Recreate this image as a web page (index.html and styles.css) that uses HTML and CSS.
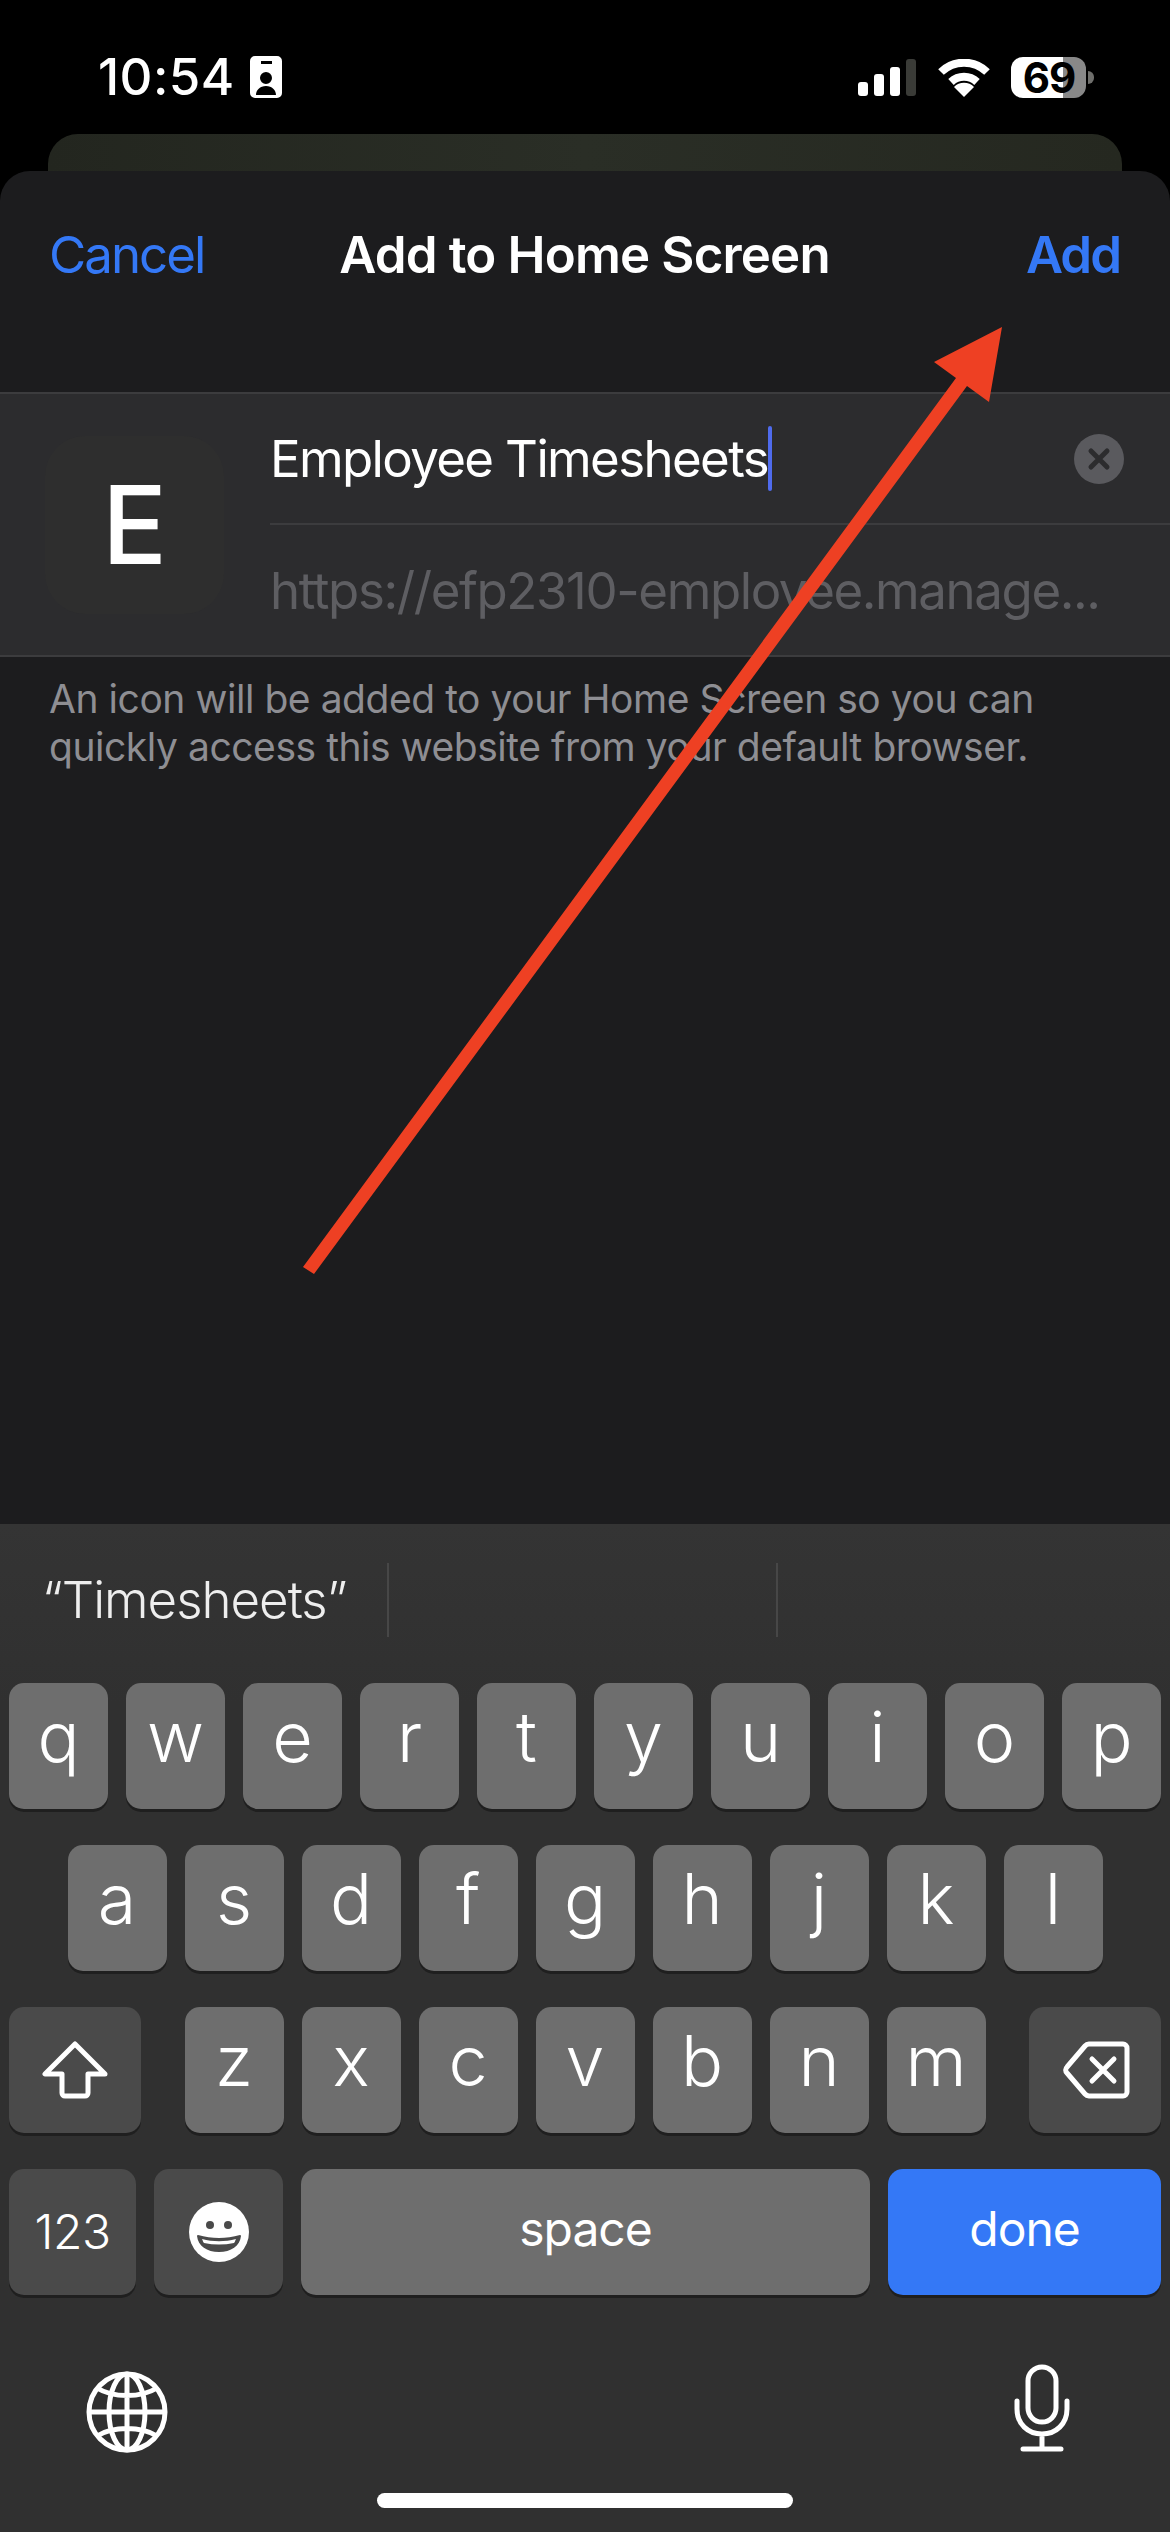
FILE: index.html
```html
<!DOCTYPE html>
<html lang="en">
<head>
  <meta charset="UTF-8" />
  <meta name="viewport" content="width=device-width, initial-scale=1.0"/>
  <title>Add to Home Screen</title>
  <link rel="stylesheet" href="styles.css">
</head>
<body>
  <div class="phone">
    <div class="status">
      <div class="status-left">
        <span class="time">10:54</span>
        <svg class="id-icon" viewBox="0 0 32 42">
          <path fill="#fff" fill-rule="evenodd" d="M5 0h22a5 5 0 0 1 5 5v32a5 5 0 0 1-5 5H5a5 5 0 0 1-5-5V5a5 5 0 0 1 5-5zM11 5v3h11V5zM16 16a6 6 0 1 0 0 12a6 6 0 1 0 0-12zM6 39h20c0-5-4-9-10-9S6 34 6 39z"/>
        </svg>
      </div>
      <div class="status-right">
        <div class="signal">
          <span class="bar bar1"></span>
          <span class="bar bar2"></span>
          <span class="bar bar3"></span>
          <span class="bar bar4"></span>
        </div>
        <svg class="wifi" viewBox="0 0 52 38">
          <path fill="none" stroke="#fff" stroke-width="8" d="M3 13a33 33 0 0 1 46 0"/>
          <path fill="none" stroke="#fff" stroke-width="8" d="M13 23a19 19 0 0 1 26 0"/>
          <path fill="#fff" d="M26 38l-10-10a14 14 0 0 1 20 0z"/>
        </svg>
        <div class="battery">69</div>
        <span class="battery-nub"></span>
      </div>
    </div>
    <div class="peek"></div>

    <div class="sheet">
      <div class="nav">
        <span class="nav-link">Cancel</span>
        <span class="nav-title">Add to Home Screen</span>
        <span class="nav-link nav-add">Add</span>
      </div>

      <div class="card">
        <div class="app-icon">E</div>
        <div class="fields">
          <div class="field field-name">
            <span class="name">Employee Timesheets</span><span class="caret"></span>
            <span class="clear">
              <svg viewBox="0 0 50 50"><path fill="none" stroke="#2c2c2e" stroke-width="5" stroke-linecap="round" d="M17 17l16 16M33 17L17 33"/></svg>
            </span>
          </div>
          <div class="field field-url">https://efp2310-employee.manage...</div>
        </div>
      </div>

      <p class="desc">An icon will be added to your Home Screen so you can<br>quickly access this website from your default browser.</p>
    </div>

    <div class="keyboard">
      <div class="suggestions">
        <div class="suggestion">“Timesheets”</div>
        <div class="suggestion"></div>
        <div class="suggestion suggestion-last"></div>
      </div>

      <div class="rows">
        <div class="row row-center">
          <span class="key">q</span><span class="key">w</span><span class="key">e</span><span class="key">r</span><span class="key">t</span><span class="key">y</span><span class="key">u</span><span class="key">i</span><span class="key">o</span><span class="key">p</span>
        </div>
        <div class="row row-center">
          <span class="key">a</span><span class="key">s</span><span class="key">d</span><span class="key">f</span><span class="key">g</span><span class="key">h</span><span class="key">j</span><span class="key">k</span><span class="key">l</span>
        </div>
        <div class="row row-between">
          <span class="key key-dark key-wide">
            <svg class="shift" viewBox="0 0 66 58"><path fill="none" stroke="#fff" stroke-width="5" stroke-linejoin="round" d="M33 3L3 33h17v19a3 3 0 0 0 3 3h20a3 3 0 0 0 3-3V33h17z"/></svg>
          </span>
          <div class="row-letters">
            <span class="key">z</span><span class="key">x</span><span class="key">c</span><span class="key">v</span><span class="key">b</span><span class="key">n</span><span class="key">m</span>
          </div>
          <span class="key key-dark key-wide">
            <svg class="backspace" viewBox="0 0 68 58"><path fill="none" stroke="#fff" stroke-width="5" stroke-linejoin="round" d="M27 3h34a4 4 0 0 1 4 4v44a4 4 0 0 1-4 4H27a6 6 0 0 1-4-2L5 32a4 4 0 0 1 0-6L23 5a6 6 0 0 1 4-2z"/><path fill="none" stroke="#fff" stroke-width="5" stroke-linecap="round" d="M30 18l22 22M52 18L30 40"/></svg>
          </span>
        </div>
        <div class="row row-bottom">
          <span class="key key-dark key-num">123</span>
          <span class="key key-dark key-emoji">
            <svg class="emoji" viewBox="0 0 60 60">
              <circle cx="30" cy="30" r="30" fill="#fff"/>
              <circle cx="21" cy="23" r="4" fill="#4a4a4a"/>
              <circle cx="39" cy="23" r="4" fill="#4a4a4a"/>
              <path fill="#4a4a4a" d="M9 33c14 4 28 4 42 0c1 0 1 1 1 1c-1 10-10 16-22 16S9 44 8 34c0 0 0-1 1-1z"/>
              <path fill="#fff" d="M13 37c11 3 23 3 34 0c-1 2-1 3-2 4c-10 2-20 2-30 0c-1-1-1-2-2-4z"/>
            </svg>
          </span>
          <span class="key key-space">space</span>
          <span class="key key-done">done</span>
        </div>
      </div>

      <div class="kb-bottom">
        <svg class="globe" viewBox="0 0 84 84">
          <g fill="none" stroke="#fff" stroke-width="5">
            <circle cx="42" cy="42" r="38"/>
            <ellipse cx="42" cy="42" rx="18" ry="38"/>
            <path d="M42 4v76M4 42h76M12 18c16 10 44 10 60 0M12 66c16-10 44-10 60 0"/>
          </g>
        </svg>
        <svg class="mic" viewBox="0 0 56 90">
          <g fill="none" stroke="#fff" stroke-width="5" stroke-linecap="round">
            <rect x="14" y="3" width="28" height="55" rx="14"/>
            <path d="M3 37v8c0 15 11 25 25 25s25-10 25-25v-8M28 70v15M9 85h38"/>
          </g>
        </svg>
      </div>

      <div class="home-bar"></div>
    </div>

    <svg class="arrow" viewBox="0 0 1170 2532">
      <polygon fill="#ee4023" points="303,1267 314,1274 967,386 989,402 1002,327 934,362 956,378"/>
    </svg>
  </div>
</body>
</html>
```

FILE: styles.css
```css
* {
  margin: 0;
  padding: 0;
  box-sizing: border-box;
}

body {
  background: #000;
  font-family: Inter, "Liberation Sans", sans-serif;
  color: #fff;
}

.phone {
  position: relative;
  width: 1170px;
  height: 2532px;
  display: flex;
  flex-direction: column;
  overflow: hidden;
}

/* status bar */
.status {
  height: 134px;
  display: flex;
  justify-content: space-between;
  align-items: flex-start;
  padding: 56px 76px 0 98px;
}

.status-left {
  display: flex;
  align-items: center;
  gap: 15px;
}

.time {
  font-size: 51px;
  font-weight: 500;
  line-height: 42px;
  letter-spacing: 0.4px;
}

.id-icon {
  width: 32px;
  height: 42px;
}

.status-right {
  display: flex;
  align-items: flex-start;
}

.signal {
  display: flex;
  align-items: flex-end;
  gap: 6px;
  height: 37px;
  margin-top: 3px;
  margin-right: 22px;
}

.bar {
  width: 10px;
  border-radius: 3px;
  background: #fff;
}

.bar1 { height: 14px; }
.bar2 { height: 22px; }
.bar3 { height: 29px; }
.bar4 { height: 37px; background: #3a3b37; }

.wifi {
  width: 52px;
  height: 38px;
  margin-top: 3px;
  margin-right: 21px;
}

.battery {
  width: 75px;
  height: 41px;
  border-radius: 12px;
  background: linear-gradient(90deg, #fff 69%, #888 69%);
  color: #000;
  font-size: 42px;
  font-weight: 700;
  line-height: 41px;
  text-align: center;
  letter-spacing: -1px;
  margin-top: 1px;
  padding-left: 1px;
}

.battery-nub {
  width: 6px;
  height: 13px;
  margin-top: 15px;
  margin-left: 2px;
  border-radius: 0 6px 6px 0;
  background: #6f6f6c;
}

.peek {
  height: 37px;
  margin: 0 48px;
  border-radius: 30px 30px 0 0;
  background: linear-gradient(90deg, #23261f, #2a2e26 50%, #252820);
}

/* sheet */
.sheet {
  height: 1353px;
  border-radius: 30px 30px 0 0;
  background: #1c1c1e;
}

.nav {
  height: 221px;
  display: grid;
  grid-template-columns: 1fr auto 1fr;
  align-items: start;
  padding: 53px 50px 0 49px;
  font-size: 51px;
  line-height: 62px;
  letter-spacing: -1.5px;
}

.nav-link {
  color: #3478f6;
  letter-spacing: -2px;
}

.nav-title {
  font-weight: 600;
  letter-spacing: -0.85px;
}

.nav-add {
  font-weight: 600;
  justify-self: end;
}

.card {
  height: 265px;
  display: flex;
  align-items: center;
  padding-left: 45px;
  background: #2c2c2e;
  border-top: 2px solid #3c3c3e;
  border-bottom: 2px solid #3c3c3e;
}

.app-icon {
  width: 179px;
  height: 178px;
  border-radius: 40px;
  background: #2e2e2e;
  display: flex;
  align-items: center;
  justify-content: center;
  font-size: 108px;
  font-weight: 500;
}

.fields {
  flex: 1;
  margin-left: 46px;
}

.field {
  height: 130px;
  display: flex;
  align-items: center;
  font-size: 51px;
}

.field-name {
  border-bottom: 2px solid #3c3c3e;
  height: 131px;
  padding-right: 46px;
}

.name {
  letter-spacing: -1.65px;
}

.caret {
  width: 4px;
  height: 65px;
  border-radius: 2px;
  background: #4f6bed;
}

.clear {
  width: 50px;
  height: 50px;
  border-radius: 50%;
  background: #5a5a5e;
  margin-left: auto;
}

.clear svg {
  display: block;
  width: 50px;
  height: 50px;
}

.field-url {
  color: #5e5e62;
  letter-spacing: -1.4px;
}

.desc {
  padding: 18px 49px 0;
  font-size: 39px;
  line-height: 48px;
  letter-spacing: -0.45px;
  color: #8e8e93;
}

/* keyboard */
.keyboard {
  height: 1008px;
  background: linear-gradient(#343434, #303030 180px);
}

.suggestions {
  display: flex;
  height: 159px;
  padding-top: 39px;
}

.suggestion {
  width: 389px;
  height: 74px;
  border-right: 2px solid #474747;
  padding-left: 42px;
  font-size: 51px;
  font-weight: 300;
  line-height: 74px;
  color: #eee;
  letter-spacing: -1px;
}

.suggestion-last {
  border-right: none;
}

.rows {
  display: flex;
  flex-direction: column;
  gap: 36px;
  padding: 0 9px;
}

.row,
.row-letters {
  display: flex;
  gap: 18px;
}

.row-center {
  justify-content: center;
}

.row-between {
  justify-content: space-between;
  gap: 0;
}

.key {
  width: 99px;
  height: 126px;
  border-radius: 15px;
  background: #6e6e6e;
  box-shadow: 0 3px 0 #1f1f1f;
  display: flex;
  justify-content: center;
  align-items: flex-start;
  padding-top: 12px;
  font-size: 70px;
  font-weight: 300;
  line-height: 84px;
}

.key-dark {
  background: #4a4a4a;
}

.key-wide {
  width: 132px;
  align-items: center;
  padding-top: 0;
}

.key-num {
  width: 127px;
  align-items: center;
  padding-top: 0;
  font-size: 48px;
  font-weight: 300;
  line-height: 126px;
  letter-spacing: -0.5px;
}

.key-emoji {
  width: 129px;
  align-items: center;
  padding-top: 0;
}

.key-space,
.key-done {
  align-items: center;
  padding-top: 0;
  padding-bottom: 6px;
  font-size: 48px;
  font-weight: 400;
  line-height: 60px;
  letter-spacing: -1px;
}

.key-space {
  flex: 1;
}

.key-done {
  width: 273px;
  background: #3478f6;
}

.shift {
  width: 66px;
  height: 58px;
}

.backspace {
  width: 68px;
  height: 58px;
  margin-left: 2px;
}

.emoji {
  width: 60px;
  height: 60px;
}

.kb-bottom {
  height: 120px;
  margin-top: 57px;
  display: flex;
  justify-content: space-between;
  align-items: center;
  padding: 0 100px 0 85px;
}

.globe {
  width: 84px;
  height: 84px;
}

.mic {
  width: 56px;
  height: 90px;
  margin-bottom: 6px;
}

.home-bar {
  width: 416px;
  height: 15px;
  margin: 21px auto 0;
  border-radius: 8px;
  background: #fff;
}

.arrow {
  position: absolute;
  top: 0;
  left: 0;
  width: 1170px;
  height: 2532px;
  pointer-events: none;
}
```
